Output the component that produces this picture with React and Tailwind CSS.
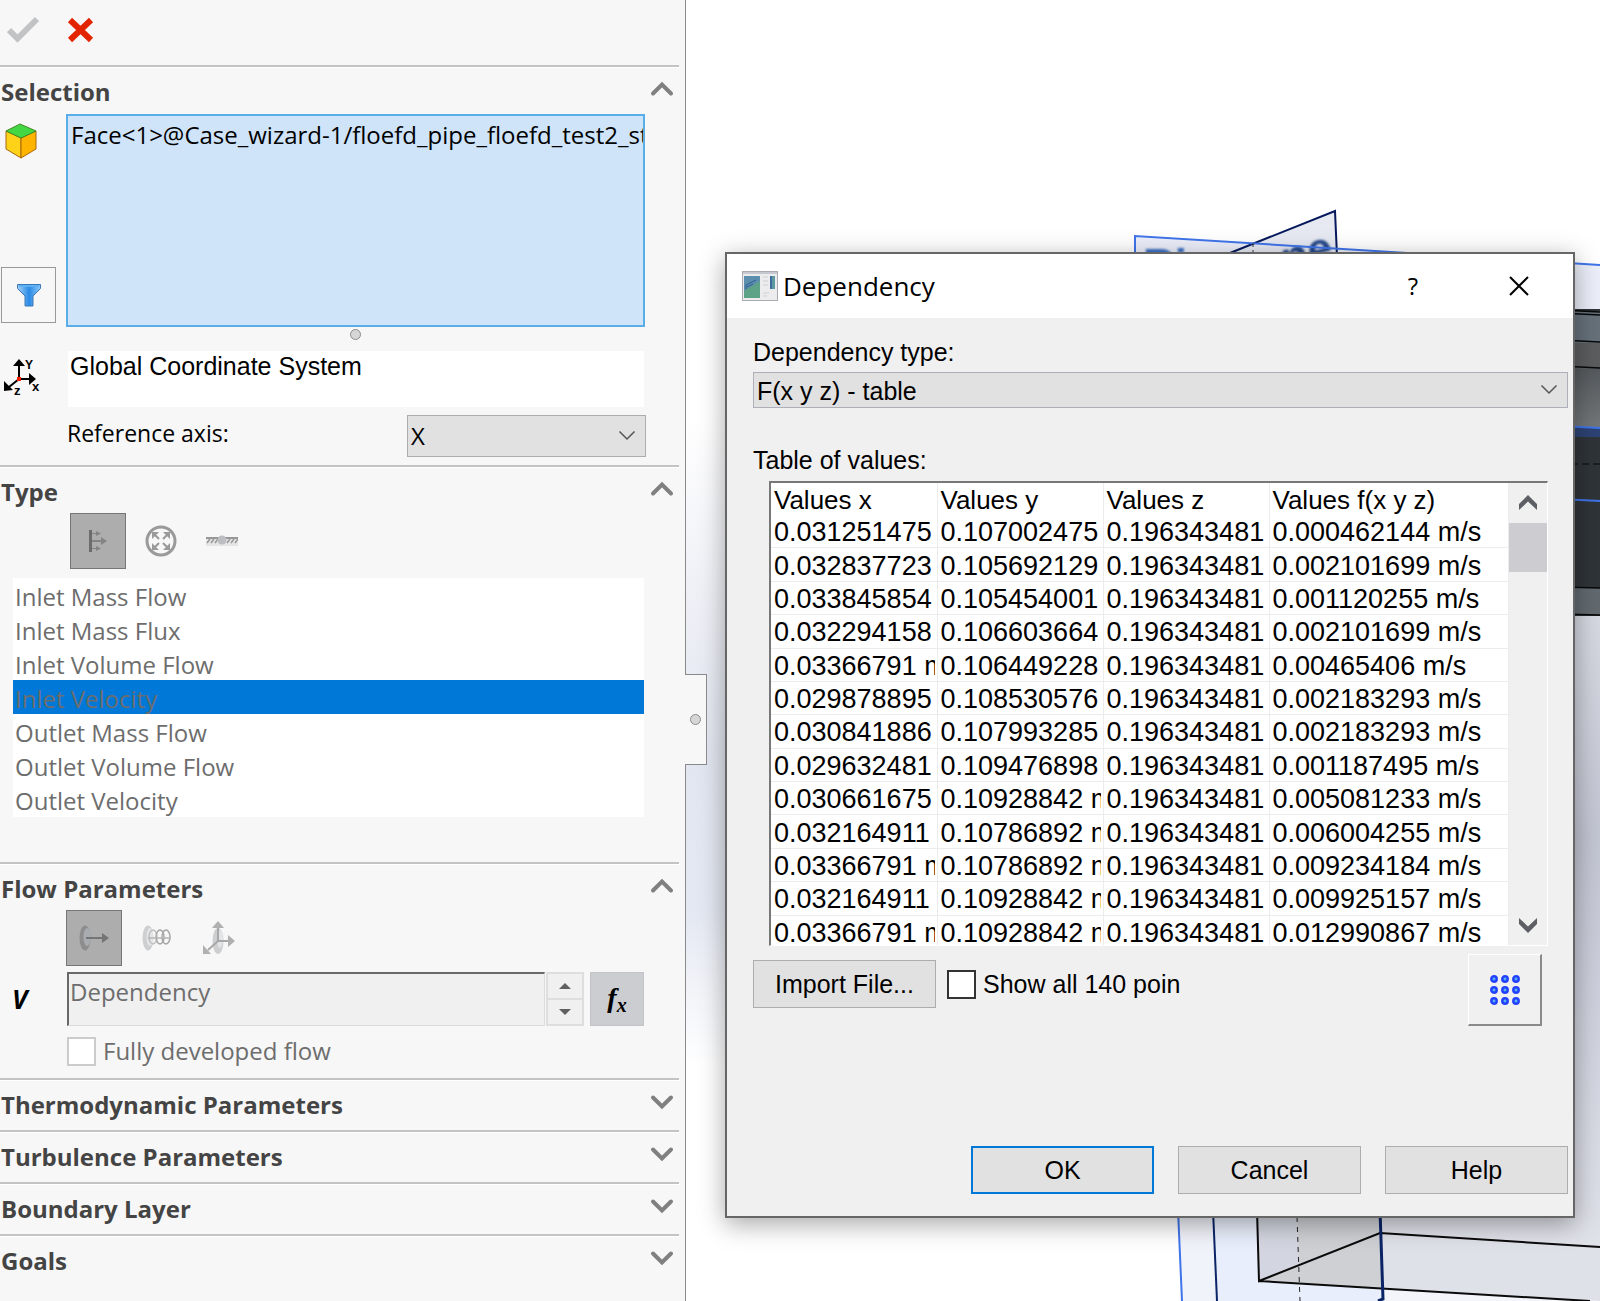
import React, { useState } from "react";

const ROWS = [
  ["0.031251475", "0.107002475", "0.196343481", "0.000462144 m/s"],
  ["0.032837723", "0.105692129", "0.196343481", "0.002101699 m/s"],
  ["0.033845854", "0.105454001", "0.196343481", "0.001120255 m/s"],
  ["0.032294158", "0.106603664", "0.196343481", "0.002101699 m/s"],
  ["0.03366791 m", "0.106449228", "0.196343481", "0.00465406 m/s"],
  ["0.029878895", "0.108530576", "0.196343481", "0.002183293 m/s"],
  ["0.030841886", "0.107993285", "0.196343481", "0.002183293 m/s"],
  ["0.029632481", "0.109476898", "0.196343481", "0.001187495 m/s"],
  ["0.030661675", "0.10928842 m", "0.196343481", "0.005081233 m/s"],
  ["0.032164911", "0.10786892 m", "0.196343481", "0.006004255 m/s"],
  ["0.03366791 m", "0.10786892 m", "0.196343481", "0.009234184 m/s"],
  ["0.032164911", "0.10928842 m", "0.196343481", "0.009925157 m/s"],
  ["0.03366791 m", "0.10928842 m", "0.196343481", "0.012990867 m/s"],
];

const TYPES = [
  "Inlet Mass Flow",
  "Inlet Mass Flux",
  "Inlet Volume Flow",
  "Inlet Velocity",
  "Outlet Mass Flow",
  "Outlet Volume Flow",
  "Outlet Velocity",
];

function Chevron({ up }) {
  return (
    <svg width="24" height="16" viewBox="0 0 24 16" fill="none" stroke="#808080" strokeWidth="4" strokeLinecap="round">
      <path d={up ? "M3 12.5 12 3.5l9 9" : "M3 3.5l9 9 9-9"} />
    </svg>
  );
}

function ThinChevron() {
  return (
    <svg className="pointer-events-none absolute right-2.5 top-1/2 -mt-1.5" width="18" height="11" viewBox="0 0 18 11" fill="none" stroke="#555" strokeWidth="1.5">
      <path d="M1.500 1.500l7.500 7.500 7.500-7.500" />
    </svg>
  );
}

function Section({ title, open, children }) {
  return (
    <section className="mr-1.5 border-t-2 border-[#c3c3c3] shadow-[inset_0_1px_0_#fff]">
      <h2>
        <button className="flex h-[50px] w-full items-center justify-between pl-px pr-[5px] text-left text-[24px] font-bold text-[#444]">
          <span>{title}</span>
          <span className="-mt-1.5">
            <Chevron up={open} />
          </span>
        </button>
      </h2>
      {children}
    </section>
  );
}

function CubeIcon() {
  return (
    <svg width="32" height="36" viewBox="0 0 32 36" strokeLinejoin="round">
      <path d="M1 8 16 15v20L1 26z" fill="#ffd21a" stroke="#a8680c" />
      <path d="M31 8 16 15v20l15-9z" fill="#ffb400" stroke="#a8680c" />
      <path d="M15 1 31 8l-15 7L1 8z" fill="#43d843" stroke="#3d8a22" />
    </svg>
  );
}

function FilterIcon() {
  return (
    <svg width="26" height="24" viewBox="0 0 26 24">
      <defs>
        <linearGradient id="funnel" x1="0" x2="1">
          <stop offset="0" stopColor="#a5d2f8" />
          <stop offset=".5" stopColor="#2a8ae6" />
          <stop offset="1" stopColor="#8cc8f7" />
        </linearGradient>
      </defs>
      <path d="M1.500 1.500h23v4L17 13v10H9V13L1.500 5.500z" fill="url(#funnel)" stroke="#3b76b4" />
      <path d="M3 3h20" stroke="#5eb0f5" strokeWidth="2" />
    </svg>
  );
}

function AxesIcon() {
  return (
    <svg width="38" height="38" viewBox="0 0 38 38" fontFamily="Liberation Sans, sans-serif" fontWeight="bold">
      <path d="M15 20V5M15 20h14M15 20 5 28" stroke="#000" strokeWidth="2" fill="none" />
      <path d="M15 0l6 7H9zM32 20l-7-6v12zM0 32V22l9 9z" fill="#000" />
      <rect x="13" y="18" width="4" height="4" fill="#f02000" />
      <text x="21" y="10" fontSize="12">Y</text>
      <text x="28" y="32" fontSize="13">x</text>
      <text x="10" y="36" fontSize="13">z</text>
    </svg>
  );
}

function OpeningIcon() {
  return (
    <svg width="18" height="22" viewBox="0 0 18 22" fill="#848484">
      <path d="M0 0h3v22H0z" fill="#6c6c6c" />
      <path d="M3 3h5v1H3zM3 10h10v2H3zM3 18h5v1H3zM7 1l5 2.500-5 2.500zM12 7l6 4-6 4zM7 16l5 2.500L7 21z" />
    </svg>
  );
}

function PressureIcon() {
  return (
    <svg width="32" height="32" viewBox="0 0 32 32" fill="none" stroke="#9a9a9a">
      <circle cx="16" cy="16" r="14" strokeWidth="3" />
      <path d="M14 14 9 9M18 14l5-5M14 18l-5 5M18 18l5 5" strokeWidth="2" />
      <path d="M7 7h7l-7 7zM25 7h-7l7 7zM7 25h7l-7-7zM25 25h-7l7-7z" fill="#9a9a9a" stroke="none" />
    </svg>
  );
}

function WallIcon() {
  return (
    <svg width="32" height="12" viewBox="0 0 32 12">
      <path d="M0 4h32v7H0z" fill="#e6e6e6" />
      <path d="M0 3h32" stroke="#979797" strokeWidth="2" />
      <path d="M4 4 1 8M8 4 5 8M12 4 9 8M24 4l-3 4M28 4l-3 4M32 4l-3 4" stroke="#979797" strokeWidth="1.500" />
      <circle cx="16" cy="5" r="4.500" fill="#bcbec2" />
    </svg>
  );
}

function NormalFlowIcon() {
  return (
    <svg width="30" height="26" viewBox="0 0 30 26">
      <ellipse cx="6" cy="13" rx="5.500" ry="12.500" fill="#8d8d8d" />
      <ellipse cx="8" cy="12" rx="3.500" ry="9" fill="#a9acb0" />
      <path d="M7 12h16v2H7z" fill="#757575" />
      <path d="M23 8l7 5-7 5z" fill="#757575" />
    </svg>
  );
}

function SwirlIcon() {
  return (
    <svg width="30" height="26" viewBox="0 0 30 26" fill="none" stroke="#a6a6a6" strokeWidth="1.500">
      <ellipse cx="6" cy="13" rx="5.500" ry="12.500" fill="#cdcfd1" stroke="none" />
      <ellipse cx="8" cy="12" rx="3.500" ry="9" fill="#e4e6e8" stroke="none" />
      <ellipse cx="11" cy="12" rx="4" ry="7" stroke="#c0c0c0" />
      <ellipse cx="18" cy="12" rx="4" ry="7" />
      <ellipse cx="24" cy="12" rx="4" ry="7" />
      <path d="M6 13h23" stroke="#b5b5b5" />
    </svg>
  );
}

function VectorIcon() {
  return (
    <svg width="32" height="34" viewBox="0 0 32 34">
      <ellipse cx="15" cy="20" rx="5.500" ry="13" fill="#cdcfd1" />
      <ellipse cx="17" cy="18" rx="3" ry="9" fill="#e2e4e6" />
      <path d="M15 20V5M15 20h11M15 20 5 29" stroke="#a8a8a8" strokeWidth="2" fill="none" />
      <path d="M15 0l6 7H9zM32 20l-7-6v12zM0 33v-9l8 9z" fill="#b0b0b0" />
    </svg>
  );
}

function Knob() {
  return <span className="block size-[11px] rounded-full border border-[#8c8c8c] bg-[#d6d6d6]" />;
}

function Scene() {
  return (
    <svg className="absolute inset-0 h-full w-full" viewBox="686 0 914 1301" preserveAspectRatio="none" aria-hidden="true">
      <defs>
        <linearGradient id="sky" x1="0" x2="0" y1="0" y2="1">
          <stop offset="0" stopColor="#ffffff" />
          <stop offset=".32" stopColor="#ffffff" />
          <stop offset=".45" stopColor="#f0f1f7" />
          <stop offset=".58" stopColor="#e2e6f0" />
          <stop offset=".7" stopColor="#e4e8f2" />
          <stop offset=".82" stopColor="#ffffff" />
          <stop offset="1" stopColor="#ffffff" />
        </linearGradient>
        <linearGradient id="pipe" x1="0" x2="0" y1="0" y2="1">
          <stop offset="0" stopColor="#d6d9e1" />
          <stop offset=".35" stopColor="#c2c5d2" />
          <stop offset=".7" stopColor="#d2d5e0" />
          <stop offset="1" stopColor="#e0e2e9" />
        </linearGradient>
        <linearGradient id="steel" x1="0" x2="0" y1="0" y2="1">
          <stop offset="0" stopColor="#555a5e" />
          <stop offset="1" stopColor="#74787a" />
        </linearGradient>
        <filter id="soft">
          <feGaussianBlur stdDeviation="1" />
        </filter>
      </defs>
      <rect x="686" width="914" height="1301" fill="url(#sky)" />
      <path d="M1135 236 1600 265v45h-465z" fill="#eceffa" />
      <path d="M1230 253 1335 211l2 42z" fill="#e6e9f2" />
      <g fontFamily="Liberation Sans, sans-serif" fontSize="44" fontWeight="bold" filter="url(#soft)">
        <text x="1143" y="280" fill="#3a6fc4">Ri</text>
        <text x="1286" y="274" fill="#274a8a" transform="rotate(-16 1286 274)">ne</text>
      </g>
      <path d="M1230 253 1335 211l2 45" fill="none" stroke="#06195c" strokeWidth="2" />
      <path d="M1135 258v-22l465 29" fill="none" stroke="#3f74ea" strokeWidth="2" />
      <path d="M1253 243v14" stroke="#333" strokeDasharray="4 3" />

      <path d="M1560 309h40v307h-40z" fill="#2f3438" />
      <path d="M1560 311h40v32h-40z" fill="#66717a" />
      <path d="M1560 343h40v26h-40z" fill="#5b5d5f" />
      <path d="M1560 369h40v60h-40z" fill="url(#steel)" />
      <path d="M1560 427h40v10h-40z" fill="#2d4374" />
      <path d="M1560 588h40v27h-40z" fill="#626a70" />
      <path d="M1560 310l40 2M1560 313l40 2M1560 340l40 2M1560 366l40 2M1560 587l40 1M1560 614l40 1" stroke="#08090a" strokeWidth="1.500" />
      <path d="M1560 464h40" stroke="#08090a" strokeDasharray="7 4" />
      <path d="M1560 426l40 2M1560 499l40 2" stroke="#3f74ea" strokeWidth="2" />

      <path d="M1560 616h40v631l-220-14v-33h180z" fill="url(#pipe)" />
      <path d="M1178 1210h35l4 91h-35z" fill="#f1f3fa" />
      <path d="M1213 1210h44l2 71 330 20h-372z" fill="#e9eefc" />
      <path d="M1383 1290l217 11h-217z" fill="#f3f5fa" />
      <path d="M1257 1210h40l3 55-41 16z" fill="#d3d6e0" />
      <path d="M1297 1210h84l2 79-124-8 40-17z" fill="#cfd0d4" />
      <path d="M1380 1233 1600 1247v54l-218-12z" fill="#dfe1e8" />
      <path d="M1178 1210l4 91" stroke="#3f74ea" strokeWidth="2" />
      <path d="M1213 1210l4 91" stroke="#0a2466" strokeWidth="2" />
      <path d="M1257 1210l2 71 121-48 220 14M1259 1281l331 20" fill="none" stroke="#0a0a0a" strokeWidth="2" />
      <path d="M1297 1217l3 84" stroke="#222" strokeDasharray="5 5" />
      <path d="M1380 1210l3 89-5 2" fill="none" stroke="#0a2466" strokeWidth="3" />
    </svg>
  );
}

function Panel() {
  const [type, setType] = useState("Inlet Velocity");
  return (
    <aside className="relative z-10 w-[686px] shrink-0 border-r border-[#8a8a8a] bg-[#f7f7f7] font-['Open_Sans',sans-serif] text-2xl">
      <div className="flex h-[65px] items-start gap-[27px] pl-[7px] pt-4">
        <button aria-label="OK" disabled>
          <svg width="33" height="27" viewBox="0 0 33 27" fill="none" stroke="#c1c3c5" strokeWidth="6">
            <path d="M2 14l8.500 8.500L30 3" />
          </svg>
        </button>
        <button aria-label="Cancel">
          <svg width="27" height="27" viewBox="0 0 27 27" fill="none" stroke="#e32400" strokeWidth="6">
            <path d="M3 4l21 20M24 4 3 24" />
          </svg>
        </button>
      </div>

      <Section title="Selection" open>
        <div className="-mt-[3px] flex pr-[34px]">
          <div className="flex w-[66px] shrink-0 flex-col justify-between pb-1 pl-px">
            <span className="pl-1 pt-[9px]">
              <CubeIcon />
            </span>
            <button aria-label="Filter" className="flex h-14 w-[55px] items-center justify-center border border-[#999]">
              <FilterIcon />
            </button>
          </div>
          <div role="listbox" aria-label="Selected faces" className="h-[213px] min-w-0 flex-1 overflow-hidden border-2 border-[#5aaee8] bg-[#cfe4f8] pl-[3px]">
            <div role="option" aria-selected="false" className="whitespace-nowrap pt-px leading-9 text-black">
              Face&lt;1&gt;@Case_wizard-1/floefd_pipe_floefd_test2_st
            </div>
          </div>
        </div>
        <div className="flex justify-center pl-8 pt-0.5">
          <Knob />
        </div>
        <div className="mt-[11px] flex pr-[35px]">
          <div className="w-[68px] shrink-0 pl-1 pt-2">
            <AxesIcon />
          </div>
          <input
            aria-label="Coordinate system"
            defaultValue="Global Coordinate System"
            className="h-14 min-w-0 flex-1 bg-white pb-[26px] pl-0.5 font-['Liberation_Sans',Arial,sans-serif] text-[25px] text-black outline-none"
          />
        </div>
        <div className="flex items-center justify-between pb-2 pl-[67px] pr-[33px] pt-2">
          <label htmlFor="axis" className="-mt-1.5 text-[23px] text-black">
            Reference axis:
          </label>
          <div className="relative w-[239px]">
            <select id="axis" className="block h-[42px] w-full appearance-none border border-[#adadad] bg-[#e1e1e1] pl-[3px] text-black outline-none">
              <option>X</option>
              <option>Y</option>
              <option>Z</option>
            </select>
            <ThinChevron />
          </div>
        </div>
      </Section>

      <Section title="Type" open>
        <div className="-mt-1 flex items-center pl-[70px]">
          <button aria-label="Flow openings" className="flex size-14 items-center justify-center border border-[#767676] bg-[#adadad]">
            <OpeningIcon />
          </button>
          <button aria-label="Pressure openings" className="ml-[19px]">
            <PressureIcon />
          </button>
          <button aria-label="Wall" className="ml-[29px]">
            <WallIcon />
          </button>
        </div>
        <ul role="listbox" aria-label="Type" className="ml-[13px] mr-[35px] mt-[9px] bg-white pb-px text-[#6d6d6d]">
          {TYPES.map((t) => (
            <li
              key={t}
              role="option"
              aria-selected={t === type}
              onClick={() => setType(t)}
              className={t === type ? "h-[34px] bg-[#0078d7] pl-0.5 leading-[38px]" : "h-[34px] pl-0.5 leading-[38px]"}
            >
              {t}
            </li>
          ))}
        </ul>
        <div className="h-[45px]" />
      </Section>

      <Section title="Flow Parameters" open>
        <div className="-mt-1 flex items-center pl-[66px]">
          <button aria-label="Normal to face" className="flex size-14 items-center justify-center border border-[#767676] bg-[#adadad]">
            <NormalFlowIcon />
          </button>
          <button aria-label="Swirl" className="ml-5">
            <SwirlIcon />
          </button>
          <button aria-label="3D vector" className="ml-[31px]">
            <VectorIcon />
          </button>
        </div>
        <div className="mt-1.5 flex items-stretch pr-[35px]">
          <label htmlFor="velocity" className="flex w-[67px] shrink-0 items-center pl-3 text-[26px] font-bold italic text-black">
            V
          </label>
          <input
            id="velocity"
            disabled
            defaultValue="Dependency"
            className="h-[54px] min-w-0 flex-1 border-b border-l-2 border-r border-t-2 border-b-[#dcdcdc] border-l-[#696969] border-r-[#dcdcdc] border-t-[#696969] bg-[#f0f0f0] pb-4 pl-px text-[#6d6d6d]"
          />
          <div className="ml-px flex w-[38px] flex-col border-2 border-[#dedede] bg-[#f0f0f0]">
            <button aria-label="Increase" className="flex flex-1 items-center justify-center border-b-2 border-[#dedede]">
              <svg width="12" height="6" viewBox="0 0 12 6" fill="#606060"><path d="M0 6 6 0l6 6z" /></svg>
            </button>
            <button aria-label="Decrease" className="flex flex-1 items-center justify-center">
              <svg width="12" height="6" viewBox="0 0 12 6" fill="#606060"><path d="M0 0l6 6 6-6z" /></svg>
            </button>
          </div>
          <button className="ml-1.5 w-[54px] border border-[#c2c4c8] bg-[#cccdd1] font-['Liberation_Serif',serif] text-[28px] font-bold italic leading-none text-black">
            f<sub className="text-xl">x</sub>
          </button>
        </div>
        <label className="flex items-center gap-[7px] pb-3 pl-[67px] pt-2.5 text-[#6d6d6d]">
          <input type="checkbox" disabled className="size-[29px] appearance-none border-2 border-[#cccccc] bg-white" />
          <span className="leading-[30px]">Fully developed flow</span>
        </label>
      </Section>

      <Section title="Thermodynamic Parameters" />
      <Section title="Turbulence Parameters" />
      <Section title="Boundary Layer" />
      <Section title="Goals" />

      <button aria-label="Collapse panel" className="absolute left-full top-[674px] flex h-[91px] w-[22px] items-center justify-center border border-l-0 border-[#8a8a8a] bg-[#f7f7f7]">
        <Knob />
      </button>
    </aside>
  );
}

function ValuesTable() {
  return (
    <div className="ml-4 mr-5 flex h-[465px] overflow-hidden border-b border-l-2 border-r border-t-2 border-b-white border-l-[#777] border-r-white border-t-[#777] bg-white">
      <div className="min-w-0 flex-1">
        <table className="h-[466px] w-full table-fixed text-left text-[27px] leading-[30px]">
          <colgroup>
            <col className="w-[166px]" />
            <col className="w-[166px]" />
            <col className="w-[166px]" />
            <col />
          </colgroup>
          <thead>
            <tr className="text-[26px]">
              {["Values x", "Values y", "Values z", "Values f(x y z)"].map((h) => (
                <th key={h} className="border-r border-[#ececec] px-0 pb-0 pl-[3px] pt-0.5 font-normal">{h}</th>
              ))}
            </tr>
          </thead>
          <tbody>
            {ROWS.map((row, i) => (
              <tr key={i}>
                {row.map((value, j) => (
                  <td key={j} className="border-b border-r border-[#ececec] pb-0 pl-[3px] pr-0.5 pt-0.5">
                    <div className="overflow-hidden whitespace-nowrap">{value}</div>
                  </td>
                ))}
              </tr>
            ))}
          </tbody>
        </table>
      </div>
      <div className="flex w-[38px] flex-col items-center bg-[#f0f0f0]">
        <button aria-label="Scroll up" className="flex h-10 items-center">
          <svg width="18" height="16" viewBox="0 0 18 16" fill="#5c5f63"><path d="M9 0l9 9v6L9 6.500 0 15V9z" /></svg>
        </button>
        <div className="h-[49px] w-full bg-[#cdcdd1]" />
        <button aria-label="Scroll down" className="mt-auto flex h-10 items-center">
          <svg width="18" height="16" viewBox="0 0 18 16" fill="#5c5f63"><path d="M9 16l9-9V1L9 9.500 0 1v6z" /></svg>
        </button>
      </div>
    </div>
  );
}

function Dialog() {
  const action = "h-12 w-[183px] border border-[#adadad] bg-[#e1e1e1]";
  return (
    <div role="dialog" aria-labelledby="dialog-title" className="relative ml-[39px] mr-[25px] mt-[252px] border-2 border-[#666] bg-[#f0f0f0] font-['Liberation_Sans',Arial,sans-serif] text-[25px] leading-8 text-black shadow-[0_6px_24px_rgba(0,0,0,0.35)]">
      <header className="flex h-16 items-center bg-white pl-[15px] pr-11 font-['Open_Sans',sans-serif]">
        <svg width="36" height="30" viewBox="0 0 36 30">
          <rect x=".5" y=".5" width="35" height="29" fill="#ececee" stroke="#aaaab0" />
          <path d="M1 2h34" stroke="#c6c8d0" strokeWidth="2" />
          <path d="M2 5h16v22H2z" fill="#5ea287" />
          <path d="M2 5h16v5L2 20z" fill="#5c8fae" />
          <path d="M4 18v-4l4-2 6-3M5 16l6-3" stroke="#2c5d93" fill="none" />
          <path d="M28 5h5v13h-5z" fill="#5d9aa0" />
          <path d="M28 5h2v13h-2z" fill="#3f6fa0" />
          <path d="M21 6h5M21 10h5M21 14h5M21 22h6M21 25h4" stroke="#cfcfd2" />
        </svg>
        <h1 id="dialog-title" className="ml-[5px] flex-1 text-[26px]">Dependency</h1>
        <button aria-label="Context help" className="mr-[91px] text-2xl">?</button>
        <button aria-label="Close">
          <svg width="20" height="20" viewBox="0 0 20 20" stroke="#000" strokeWidth="2"><path d="M1 1l18 18M19 1 1 19" /></svg>
        </button>
      </header>
      <div className="pb-[22px] pl-[26px] pr-[5px] pt-[18px]">
        <label htmlFor="dependency-type">Dependency type:</label>
        <div className="relative mt-1">
          <select id="dependency-type" className="block h-9 w-full appearance-none border border-[#adb0b8] bg-[#e1e1e1] pl-[3px] pt-0.5 outline-none">
            <option>F(x y z) - table</option>
          </select>
          <ThinChevron />
        </div>
        <p className="mb-[5px] mt-9">Table of values:</p>
        <ValuesTable />
        <div className="flex items-start pr-[26px] pt-2">
          <button className="mt-1.5 h-12 w-[183px] border border-[#adadad] bg-[#e1e1e1]">Import File...</button>
          <label className="ml-[11px] mt-3.5 flex items-center gap-[7px]">
            <input type="checkbox" className="size-[29px] appearance-none border-2 border-[#333] bg-white" />
            Show all 140 poin
          </label>
          <button aria-label="Show points" className="ml-auto flex h-[72px] w-[74px] items-center justify-center border-b-2 border-l border-r-2 border-t border-b-[#8a8a8a] border-l-white border-r-[#8a8a8a] border-t-white">
            <svg width="32" height="32" viewBox="0 0 32 32" fill="#55b4f0" stroke="#2440ff" strokeWidth="2.500">
              {[5, 16, 27].map((y) => [5, 16, 27].map((x) => <circle key={x + "-" + y} cx={x} cy={y} r="2.700" />))}
            </svg>
          </button>
        </div>
        <div className="mt-[120px] flex justify-end gap-6">
          <button className="h-12 w-[183px] border-2 border-[#0078d7] bg-[#e1e1e1]">OK</button>
          <button className={action}>Cancel</button>
          <button className={action}>Help</button>
        </div>
      </div>
    </div>
  );
}

export default function App() {
  return (
    <div className="flex min-h-screen overflow-hidden bg-white">
      <Panel />
      <main className="relative min-w-0 flex-1">
        <Scene />
        <Dialog />
      </main>
    </div>
  );
}
